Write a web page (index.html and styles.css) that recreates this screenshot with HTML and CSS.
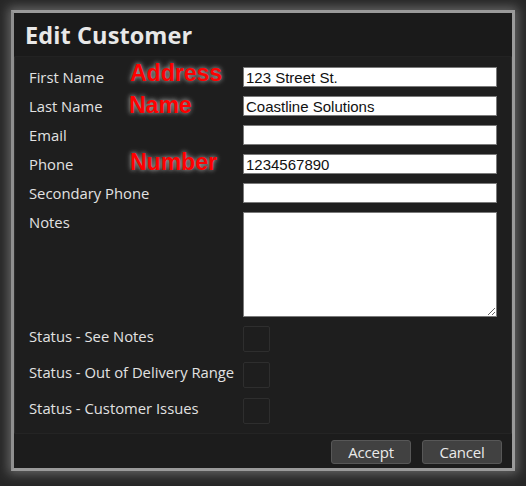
FILE: index.html
```html
<!DOCTYPE html>
<html>
<head>
<meta charset="utf-8">
<link rel="stylesheet" href="styles.css">
</head>
<body>
<div class="dialog">
  <div class="dialog-header"><h1 class="title">Edit Customer</h1></div>
  <div class="dialog-body">
    <div class="row"><label class="lbl">First Name</label><input class="field" type="text" value="123 Street St."></div>
    <div class="row"><label class="lbl">Last Name</label><input class="field" type="text" value="Coastline Solutions"></div>
    <div class="row"><label class="lbl">Email</label><input class="field" type="text" value=""></div>
    <div class="row"><label class="lbl">Phone</label><input class="field" type="text" value="1234567890"></div>
    <div class="row"><label class="lbl">Secondary Phone</label><input class="field" type="text" value=""></div>
    <div class="row"><label class="lbl">Notes</label><textarea class="notes"></textarea></div>
    <div class="row row-check"><label class="lbl">Status - See Notes</label><input class="check" type="checkbox"></div>
    <div class="row row-check"><label class="lbl">Status - Out of Delivery Range</label><input class="check" type="checkbox"></div>
    <div class="row row-check"><label class="lbl">Status - Customer Issues</label><input class="check" type="checkbox"></div>
  </div>
  <div class="dialog-footer">
    <button class="btn">Accept</button>
    <button class="btn">Cancel</button>
  </div>
  <span class="annot annot-address">Address</span>
  <span class="annot annot-name">Name</span>
  <span class="annot annot-number">Number</span>
</div>
</body>
</html>
```
FILE: styles.css
```css
html, body {
  margin: 0;
  padding: 0;
  background: #272727;
  width: 526px;
  height: 486px;
  overflow: hidden;
}
.dialog {
  position: relative;
  box-sizing: content-box;
  width: 498px;
  height: 455px;
  margin: 10px 0 0 11px;
  border: 3px solid #9a9a9a;
  border-left-color: #8f8f8f;
  background: #1e1e1e;
  box-shadow: 0 0 10px 3px rgba(150,150,150,0.55), inset 0 0 1px 1px rgba(60,60,60,0.6);
  display: flex;
  flex-direction: column;
  font-family: "Open Sans", "DejaVu Sans", sans-serif;
}
.dialog-header {
  height: 43px;
  background: #1a1a1a;
  border-bottom: 1px solid #222;
  padding-left: 11px;
  display: flex;
  align-items: center;
}
.title {
  margin: 0;
  font-size: 23.5px;
  font-weight: 700;
  color: #e8e8e8;
  letter-spacing: 0.1px;
}
.dialog-body {
  flex: 1;
  padding: 10px 15px 0 15px;
  display: flex;
  flex-direction: column;
  gap: 9px;
}
.row {
  display: grid;
  grid-template-columns: 214px 254px;
  align-items: start;
}
.row-check + .row-check { margin-top: 1px; }
.lbl {
  font-size: 14.8px;
  line-height: 20px;
  color: #e2e2e2;
  white-space: nowrap;
}
.field {
  box-sizing: border-box;
  width: 254px;
  height: 20px;
  margin: 0;
  padding: 0 2px;
  border: 1px solid #7a7a7a;
  background: #fff;
  font-family: "Liberation Sans", Arial, sans-serif;
  font-size: 15px;
  color: #111;
  outline: none;
}
.notes {
  box-sizing: border-box;
  width: 254px;
  height: 105px;
  margin: 0;
  padding: 2px;
  border: 1px solid #7a7a7a;
  background: #fff;
  font-family: "Liberation Sans", Arial, sans-serif;
  font-size: 15px;
  outline: none;
}
.check {
  appearance: none;
  -webkit-appearance: none;
  box-sizing: border-box;
  width: 27px;
  height: 26px;
  margin: 0;
  border: 1px solid #2e2e2e;
  border-radius: 2px;
  background: #1e1e1e;
}
.dialog-footer {
  height: 35px;
  border-top: 1px solid #242424;
  background: #1c1c1c;
  display: flex;
  justify-content: flex-end;
  align-items: flex-start;
  padding: 6px 10px 0 0;
  box-sizing: border-box;
  gap: 11px;
}
.btn {
  box-sizing: border-box;
  width: 80px;
  height: 24px;
  margin: 0;
  padding: 0;
  background: #414141;
  border: 1px solid #575757;
  border-radius: 3px;
  color: #eaeaea;
  font-family: "Open Sans", "DejaVu Sans", sans-serif;
  font-size: 15px;
  line-height: 20px;
  letter-spacing: -0.2px;
}
.annot {
  position: absolute;
  font-family: "Liberation Sans", Arial, sans-serif;
  font-weight: 700;
  font-size: 23px;
  line-height: 23px;
  color: #ff0000;
  text-shadow: 0 0 4px rgba(255,255,255,0.55), 0 0 7px rgba(255,255,255,0.3);
  white-space: nowrap;
}
.annot-address { left: 116px; top: 49px; }
.annot-name { left: 115px; top: 81px; }
.annot-number { left: 116px; top: 138px; }
```
